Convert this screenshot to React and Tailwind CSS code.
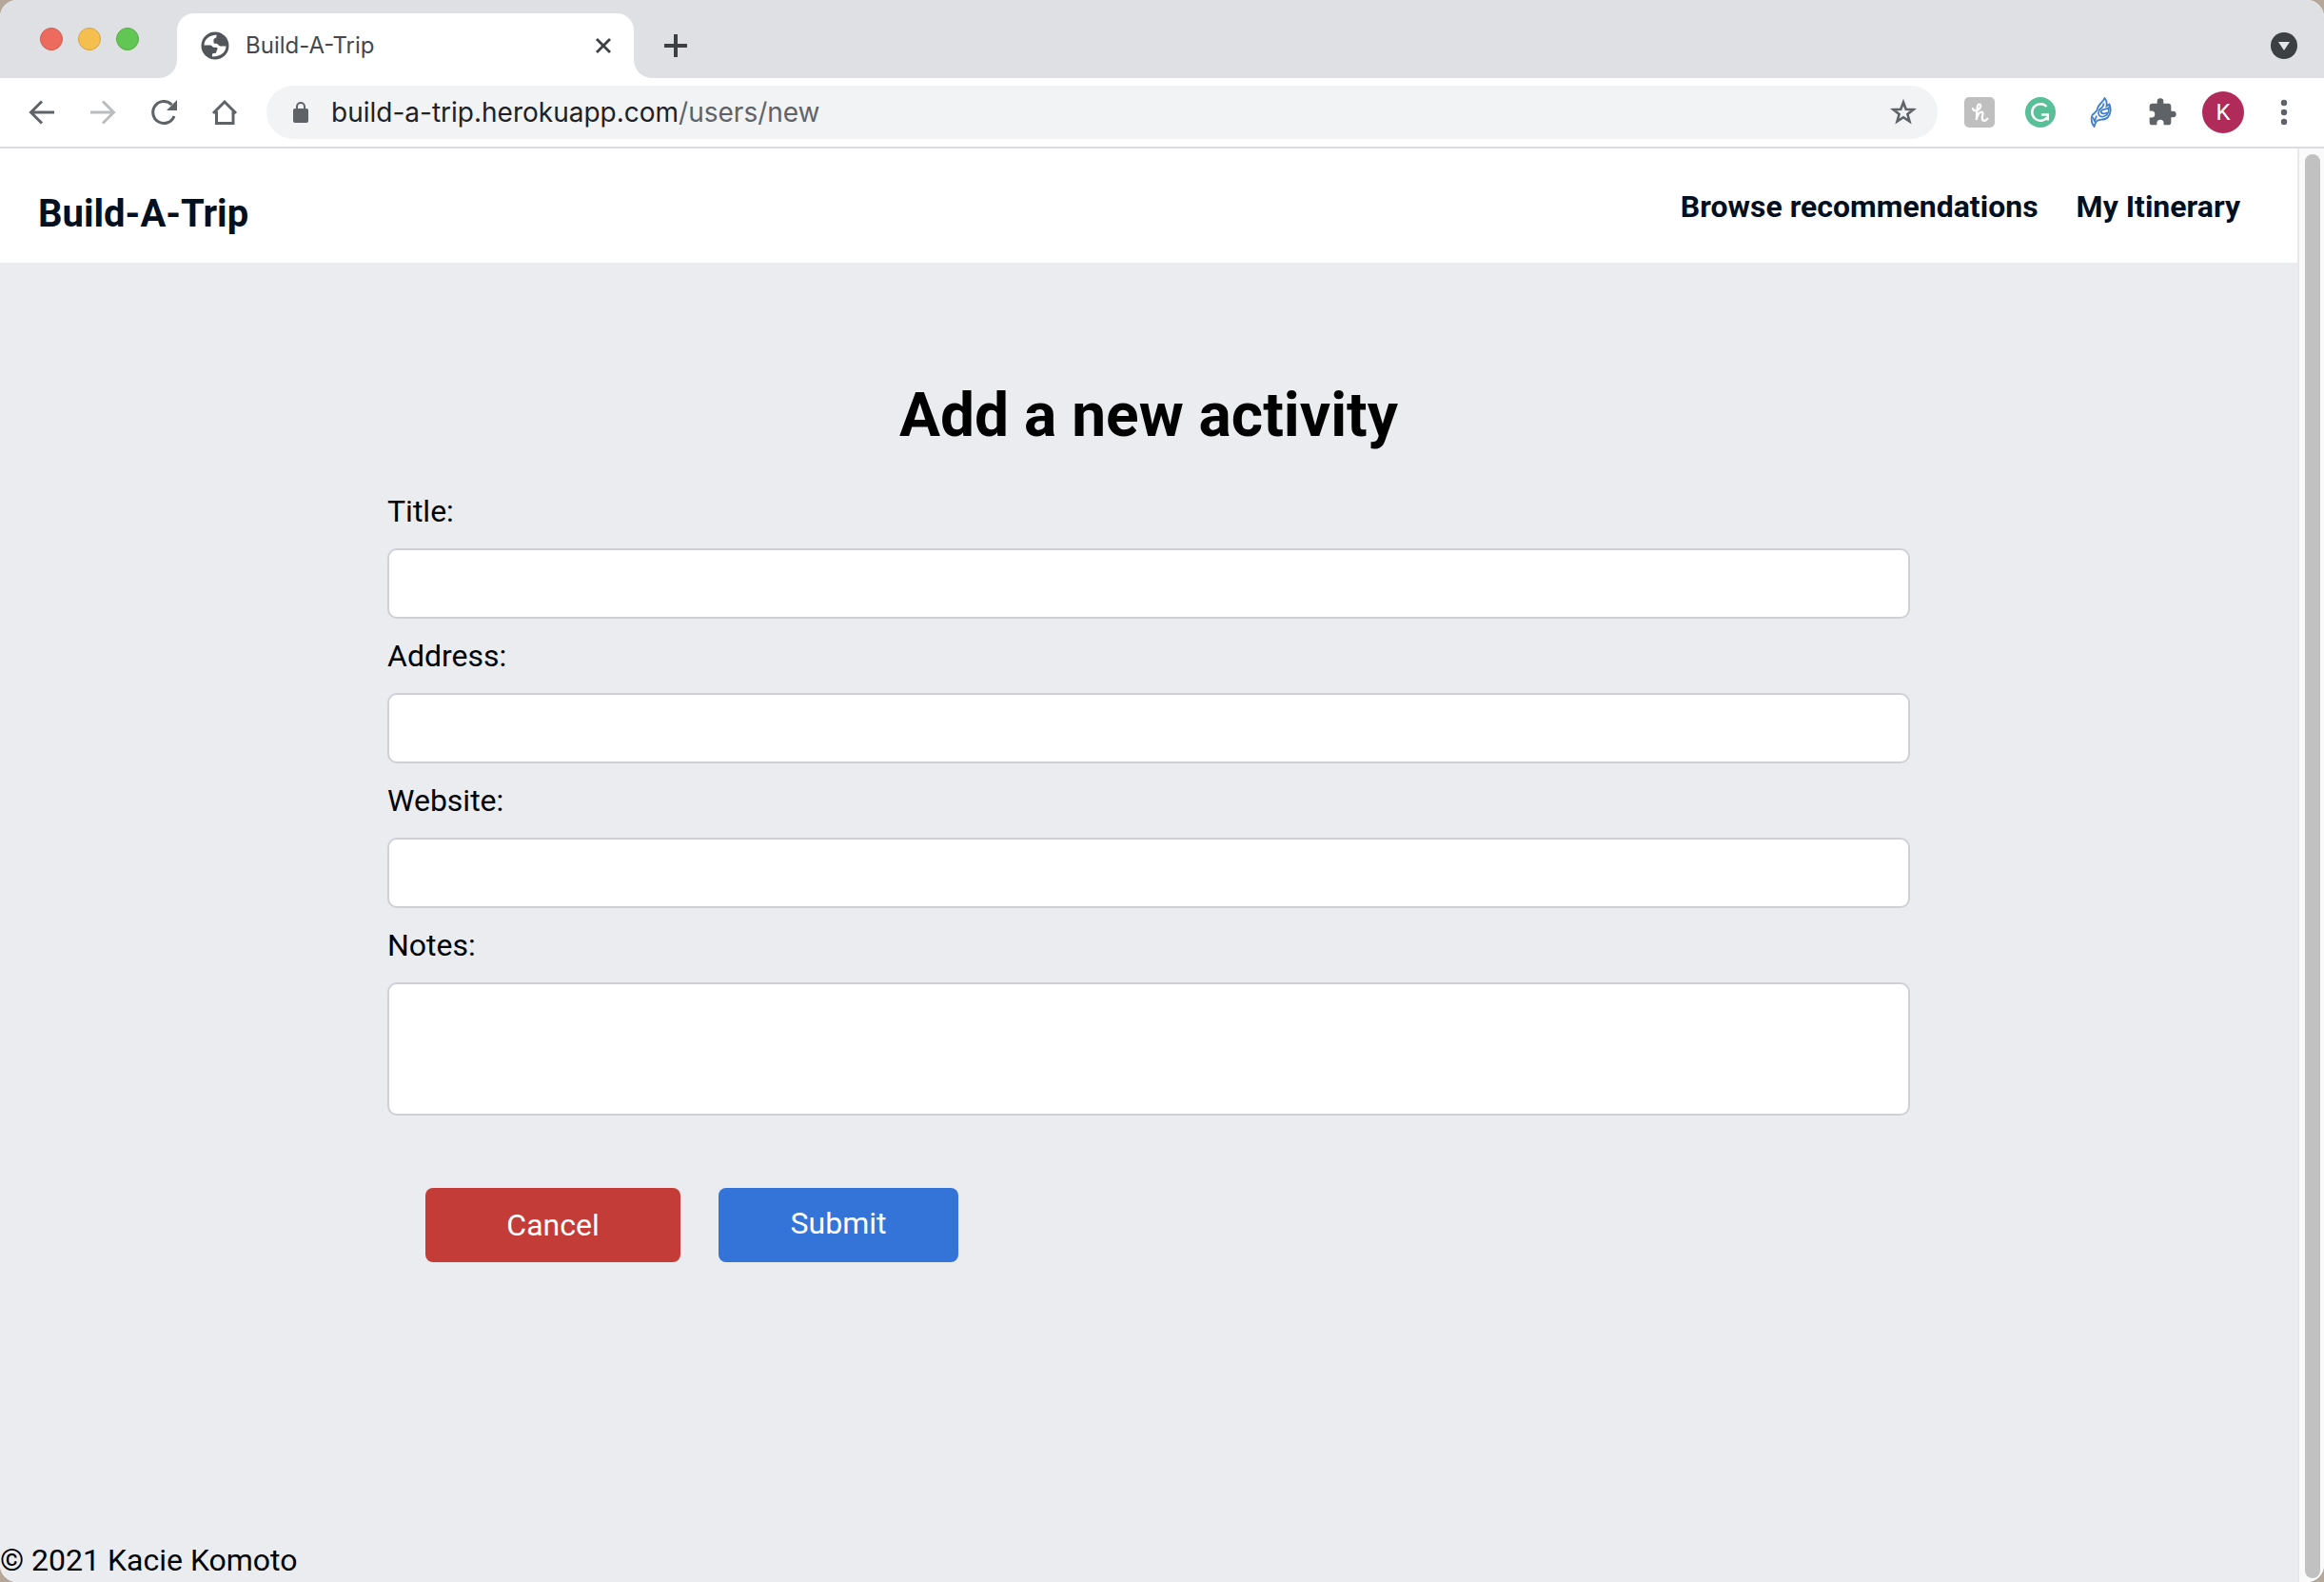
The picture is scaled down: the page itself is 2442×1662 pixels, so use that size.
import React from "react";

const Icon = ({ className, box, children }) => (
  <svg className={className} viewBox={box} fill="none" aria-hidden="true">
    {children}
  </svg>
);

function TabStrip() {
  return (
    <div className="flex h-[82px] items-stretch bg-[#dfe0e4] pr-7">
      <div className="flex w-[166px] shrink-0 gap-4 pt-[29px] pl-[42px]">
        <button aria-label="Close window" className="size-6 rounded-full border border-[#d05a4e] bg-[#ed6a5f]" />
        <button aria-label="Minimize window" className="size-6 rounded-full border border-[#d6a243] bg-[#f5bf4f]" />
        <button aria-label="Zoom window" className="size-6 rounded-full border border-[#58a942] bg-[#62c655]" />
      </div>
      <div className="flex items-end">
        <svg className="size-5" viewBox="0 0 20 20" aria-hidden="true"><path d="M20 0v20H0C12 20 20 12 20 0z" fill="#fff" /></svg>
      </div>
      <div className="mt-[14px] flex w-[480px] items-center rounded-t-[18px] bg-white pr-[23px] pl-[25px]">
        <Icon className="size-[30px]" box="0 0 30 30">
          <circle cx="15" cy="15" r="14.500" fill="#52555a" />
          <path d="M3.500 14.500C3.500 9 8 4 16.500 3.500V5.500C16.500 7 14 7 13.500 8.500C13 10 14 10.500 13.500 12C13 13 15.500 12.500 17 13C19 14 19 15.500 21 15.500H26.500C26.500 21 22 26.500 12 26.500V23.500C14 22.500 16.500 23.500 16.500 21C16.500 19.500 18 19 17.500 17.500C17 16 15 17 13 16.500C12 16 11.500 14.500 10 14.500z" fill="#fff" />
        </Icon>
        <span className="ml-[17px] flex-1 font-[Inter] text-2xl leading-8 text-[#45484c]">Build-A-Trip</span>
        <button aria-label="Close tab">
          <Icon className="size-[18px]" box="0 0 18 18"><path d="M2 2l14 14M16 2L2 16" stroke="#3c4043" strokeWidth="2.800" /></Icon>
        </button>
      </div>
      <div className="flex items-end">
        <svg className="size-5" viewBox="0 0 20 20" aria-hidden="true"><path d="M0 0v20h20C8 20 0 12 0 0z" fill="#fff" /></svg>
      </div>
      <div className="flex flex-1 items-center justify-between pt-[14px] pl-3">
        <button aria-label="New tab">
          <Icon className="size-6" box="0 0 24 24"><path d="M12 0v24M0 12h24" stroke="#3c4043" strokeWidth="4" /></Icon>
        </button>
        <button aria-label="Search tabs">
          <Icon className="size-7" box="0 0 28 28"><circle cx="14" cy="14" r="14" fill="#3c4043" /><path d="M8 10h12l-6 9z" fill="#e3e4e7" /></Icon>
        </button>
      </div>
    </div>
  );
}

function Toolbar() {
  return (
    <div className="flex h-[74px] items-center border-b-2 border-[#dadbe0] bg-white pr-[38px] pl-7">
      <div className="flex gap-8">
        <button aria-label="Back">
          <Icon className="size-8" box="0 0 32 32"><path d="M16 4.500L4.500 16L16 27.500M4.500 16H29" stroke="#5f6368" strokeWidth="3" /></Icon>
        </button>
        <button aria-label="Forward" disabled>
          <Icon className="size-8" box="0 0 32 32"><path d="M16 4.500L27.500 16L16 27.500M27.500 16H3" stroke="#babcbe" strokeWidth="3" /></Icon>
        </button>
        <button aria-label="Reload">
          <Icon className="size-8" box="0 0 32 32"><path d="M27 20A11.500 11.500 0 1 1 24.500 8" stroke="#5f6368" strokeWidth="3" /><path d="M30 3v11H19z" fill="#5f6368" /></Icon>
        </button>
        <button aria-label="Home">
          <Icon className="size-8" box="0 0 32 32"><path d="M4 17L16 5l12 12M7.500 15v12.500h17.500V15" stroke="#5f6368" strokeWidth="3" /></Icon>
        </button>
      </div>
      <div className="ml-7 flex h-14 flex-1 items-center rounded-full bg-[#f1f3f4] pr-[21px] pl-7">
        <Icon className="h-[22px] w-4" box="0 0 16 22"><rect y="7" width="16" height="15" rx="2" fill="#5f6368" /><path d="M4 8V5a4 4 0 0 1 8 0v3" stroke="#5f6368" strokeWidth="2" /></Icon>
        <div className="ml-6 flex-1 font-[Inter] text-[28px] leading-9 text-[#5f6368]"><span className="text-[#202124]">build-a-trip.herokuapp.com</span>/users/new</div>
        <button aria-label="Bookmark this page">
          <Icon className="size-[30px]" box="0 0 30 30"><path d="M15 4.500l2.700 7.300 7.800.3-6.100 4.900 2.100 7.500-6.500-4.300-6.500 4.300 2.100-7.500-6.100-4.900 7.800-.3z" stroke="#5f6368" strokeWidth="2.600" /></Icon>
        </button>
      </div>
      <div className="ml-7 flex items-center">
        <button aria-label="Honey">
          <Icon className="size-8" box="0 0 32 32"><rect width="32" height="32" rx="5" fill="#bfbfbf" /><path d="M9 12C10 15.500 14.500 15 16.500 11.500C18.500 7.500 15 6 14 9.500C13 13 13.300 19 12.700 24C13.500 19 16 15.500 18.200 15.500C21 15.500 18.500 20 18.800 22.500C19.200 25.500 22.500 25.500 24.300 22.700" stroke="#fff" strokeWidth="2.200" strokeLinecap="round" /></Icon>
        </button>
        <button aria-label="Grammarly" className="ml-8">
          <Icon className="size-8" box="0 0 32 32"><circle cx="16" cy="16" r="16" fill="#58bf98" /><path d="M22.500 10A8.800 8.800 0 1 0 23 21.500M17 18.500h6.800v6" stroke="#fff" strokeWidth="2.400" /></Icon>
        </button>
        <button aria-label="Feather" className="ml-8">
          <Icon className="size-8" box="0 0 32 32"><path d="M8.500 31C6 28 5 23 6.500 19C8 17 11.500 16 12 12C13 7 17 7 19.500 1C22 4 22 7 21.500 9.500L24.500 7.500C26.500 12 26 18 22.500 21.500C19 25 13 22.500 11 25.500C9.500 27.500 9 29 8.500 31z" stroke="#3e7ecb" strokeWidth="1.800" /><path d="M18.500 6.500C19 11 15 11 13.500 14C12 18 14 21 18 20.500C22 20 24 16 24 11C22 14 18 11 15.500 15C16 18 20 18 22 16M7 21L9 25.500L11 19.500" stroke="#3e7ecb" strokeWidth="1.700" /></Icon>
        </button>
        <button aria-label="Extensions" className="ml-8">
          <Icon className="size-8" box="0 0 24 24"><path fill="#5f6368" d="M20.500 11H19V7c0-1.100-.9-2-2-2h-4V3.500a2.500 2.500 0 0 0-5 0V5H4c-1.100 0-2 .9-2 2v3.800h1.500a2.700 2.700 0 0 1 0 5.400H2V20c0 1.100.9 2 2 2h3.800v-1.500a2.700 2.700 0 0 1 5.400 0V22H17c1.100 0 2-.9 2-2v-4h1.500a2.500 2.500 0 0 0 0-5z" /></Icon>
        </button>
        <button aria-label="Profile" className="ml-[26px] size-11 rounded-full bg-[#b12b5a] font-[Roboto] text-2xl leading-8 text-white">K</button>
        <button aria-label="Menu" className="ml-[38px]">
          <Icon className="h-7 w-2" box="0 0 8 28"><g fill="#5f6368"><circle cx="4" cy="4" r="3.200" /><circle cx="4" cy="14" r="3.200" /><circle cx="4" cy="24" r="3.200" /></g></Icon>
        </button>
      </div>
    </div>
  );
}

const fields = [
  { id: "title", label: "Title:" },
  { id: "street", label: "Address:" },
  { id: "website", label: "Website:" },
];

const control = "mt-[18px] block w-full rounded-[10px] border-2 border-[#cfcfd6] bg-white px-4";

function ActivityForm() {
  return (
    <form className="mx-auto mt-[38px] w-full max-w-[1600px]" onSubmit={(e) => e.preventDefault()}>
      <div className="flex flex-col gap-[18px] leading-[42px]">
        {fields.map((f) => (
          <div key={f.id}>
            <label htmlFor={f.id} className="block">{f.label}</label>
            <input id={f.id} type="text" className={`${control} h-[74px]`} />
          </div>
        ))}
        <div>
          <label htmlFor="notes" className="block">Notes:</label>
          <textarea id="notes" className={`${control} h-[140px] resize-none`} />
        </div>
      </div>
      <div className="mt-[76px] flex gap-10 pl-10 text-white">
        <a href="#" className="flex h-[78px] w-[268px] items-center justify-center rounded-lg bg-[#c43c37]">Cancel</a>
        <button type="submit" className="h-[78px] w-[252px] rounded-lg bg-[#3474d8] pb-1">Submit</button>
      </div>
    </form>
  );
}

export default function App() {
  return (
    <div className="bg-[#b5a799]">
      <div className="flex min-h-screen flex-col overflow-hidden rounded-[18px] bg-white">
        <TabStrip />
        <Toolbar />
        <div className="flex flex-1">
          <div className="flex flex-1 flex-col bg-[#ebecf0] font-[Roboto] text-[32px] leading-10 text-black">
            <header className="flex items-start justify-between bg-white pt-10 pr-[60px] pb-[22px] pl-10 font-bold text-[#03101f]">
              <a href="#" className="text-[40px] leading-[58px]">Build-A-Trip</a>
              <nav className="flex gap-10 leading-[42px]">
                <a href="#">Browse recommendations</a>
                <a href="#">My Itinerary</a>
              </nav>
            </header>
            <main className="flex-1 pt-[120px]">
              <h1 className="text-center text-[64px] leading-[82px] font-bold">Add a new activity</h1>
              <ActivityForm />
            </main>
            <footer className="pb-[3px]">© 2021 Kacie Komoto</footer>
          </div>
          <div className="flex w-7 border-l-2 border-[#e8e8e8] bg-[#fafafa] pt-[6px] pb-1 pl-[6px]">
            <div className="w-4 rounded-full bg-[#c1c1c1]" />
          </div>
        </div>
      </div>
    </div>
  );
}
